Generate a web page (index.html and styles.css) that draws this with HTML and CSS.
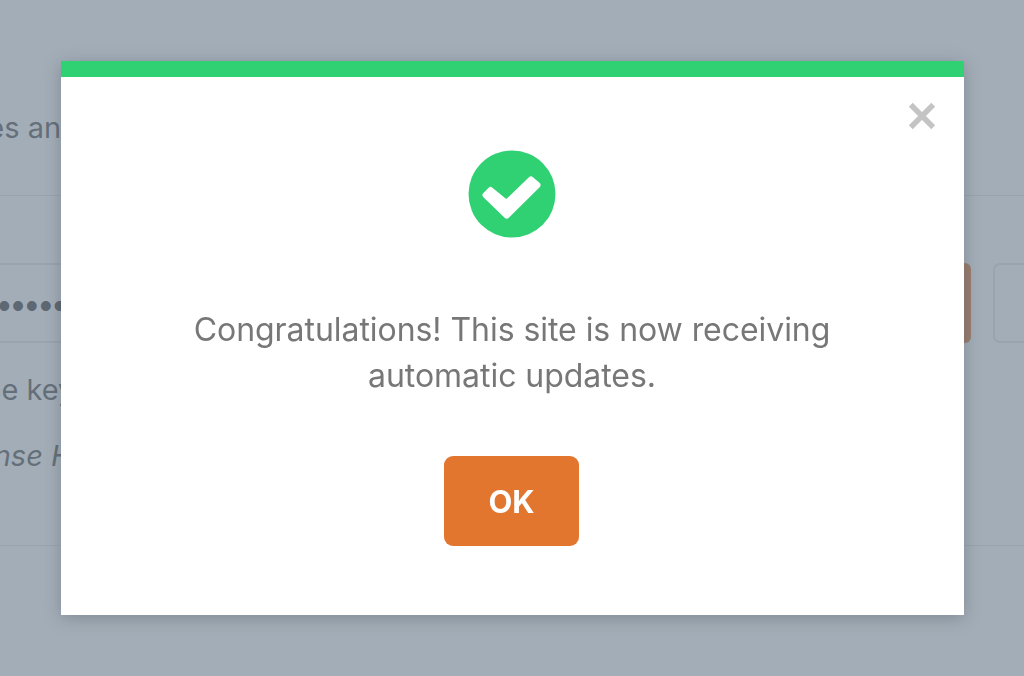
FILE: index.html
```html
<!DOCTYPE html>
<html lang="en">
<head>
<meta charset="utf-8">
<title>License activated</title>
<link rel="stylesheet" href="styles.css">
</head>
<body>
<main class="page">
  <p class="intro">Licenses and keys</p>
  <section class="license">
    <div class="key-row">
      <div class="key-input">••••••••</div>
      <div class="key-activate"></div>
      <div class="key-other"></div>
    </div>
    <p class="help">Enter the license key</p>
    <p class="note">License Help</p>
  </section>
</main>
<div class="backdrop"></div>
<div class="modal" role="dialog">
  <svg class="close" viewBox="0 0 28 28" aria-label="Close"><path d="M2.800 2.800 25.200 25.200M25.200 2.800 2.800 25.200"/></svg>
  <svg class="check" viewBox="0 0 88 88" aria-hidden="true">
    <circle cx="44" cy="44" r="43.500"/>
    <path d="M17.500 45 22.500 40 38.500 53 63 29.500 69.500 35 38.700 65.500Z"/>
  </svg>
  <p class="message">Congratulations! This site is now receiving<br>automatic updates.</p>
  <button class="ok" type="button">OK</button>
</div>
</body>
</html>
```
FILE: styles.css
```css
* { box-sizing: border-box; }
html, body { margin: 0; height: 100%; }
body {
  width: 1024px;
  height: 676px;
  overflow: hidden;
  background: #fff;
  font-family: Inter, "Liberation Sans", sans-serif;
  color: #4f4f4f;
}
.page { height: 676px; overflow: hidden; }
.intro {
  margin: 0 0 0 -102px;
  height: 195px;
  padding-top: 110px;
  font-size: 29px;
  line-height: 36px;
  white-space: nowrap;
}
.license { border-top: 1px solid #e4e4e4; border-bottom: 1px solid #e4e4e4; height: 351px; }
.key-row { display: flex; margin-top: 67px; height: 80px; }
.key-input {
  width: 802px;
  flex: none;
  margin-left: -2px;
  border-top: 2px solid #e4e4e4;
  border-bottom: 2px solid #e4e4e4;
  color: #3a3a3a;
  font-family: "Liberation Sans", sans-serif;
  font-size: 36px;
  line-height: 82px;
  letter-spacing: 1.200px;
  overflow: hidden;
}
.key-activate {
  width: 171px;
  flex: none;
  background: #e2762f;
  border-radius: 0 6px 6px 0;
}
.key-other {
  flex: none;
  width: 60px;
  margin-left: 22px;
  border: 2px solid #e4e4e4;
  border-radius: 7px;
}
.help { margin: 29px 0 0 -210px; font-size: 29px; line-height: 36px; white-space: nowrap; }
.note { margin: 30px 0 0 -63px; font-size: 29px; line-height: 36px; font-style: italic; white-space: nowrap; }
.backdrop {
  position: fixed;
  inset: 0;
  background: rgba(114, 129, 145, 0.65);
}
.modal {
  position: fixed;
  left: 61px;
  top: 61px;
  width: 903px;
  height: 554px;
  background: #fff;
  border-top: 16px solid #2fd173;
  box-shadow: 0 3px 16px rgba(50, 60, 70, 0.3);
  display: flex;
  flex-direction: column;
  align-items: center;
  padding-top: 73px;
}
.close {
  position: absolute;
  top: 25px;
  right: 28px;
  width: 28px;
  height: 28px;
  fill: none;
  stroke: #c4c4c4;
  stroke-width: 5.500;
}
.check { width: 88px; height: 88px; flex: none; display: block; margin-right: 2px; }
.check circle { fill: #2fd173; }
.check path {
  fill: #fff;
  stroke: #fff;
  stroke-width: 6;
  stroke-linejoin: round;
}
.message {
  margin: 69px 1px 0 0;
  font-size: 32px;
  letter-spacing: -0.050px;
  line-height: 46px;
  color: #777;
  text-align: center;
  white-space: nowrap;
}
.ok {
  margin: 57px 2px 0 0;
  width: 135px;
  height: 90px;
  border: 0;
  border-radius: 9px;
  background: #e2762f;
  color: #fff;
  font: 700 31px Inter, "Liberation Sans", sans-serif;
}
```
